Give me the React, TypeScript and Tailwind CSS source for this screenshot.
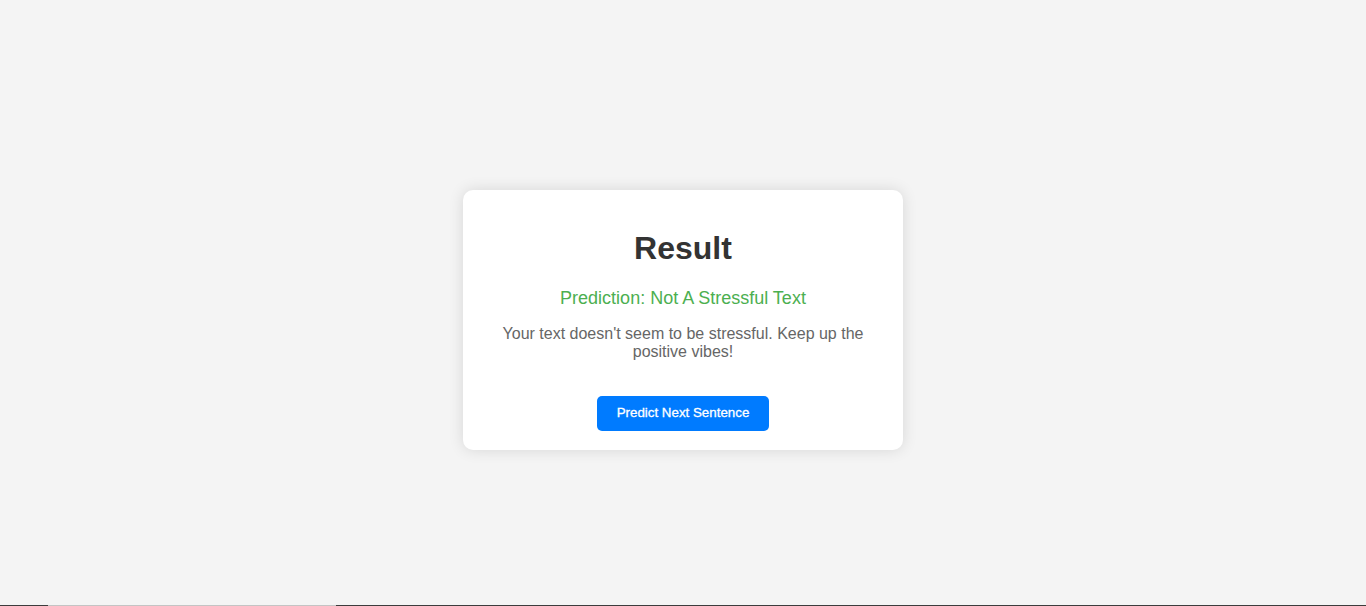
export default function App() {
  return (
    <div className="flex h-[606px] flex-col bg-[#f4f4f4] font-['Liberation_Sans',Arial,sans-serif]">
      <main className="flex flex-1 justify-center pt-[190px]">
        <div className="flex h-fit w-[440px] flex-col items-center rounded-[10px] bg-white px-5 pb-[19px] pt-5 text-center shadow-[0_0_15px_rgba(0,0,0,0.12)]">
          <h1 className="mt-5 text-[32px] font-bold leading-[37px] text-[#333]">
            Result
          </h1>
          <p className="mt-[21px] text-[18px] leading-[21px] text-[#4caf50]">
            Prediction: Not A Stressful Text
          </p>
          <p className="mt-4 w-[400px] text-[16px] leading-[18.4px] text-[#666]">
            Your text doesn't seem to be stressful. Keep up the positive vibes!
          </p>
          <button
            type="button"
            className="mt-[33.7px] h-[35px] rounded-[5px] bg-[#007bff] px-5 text-[13.333px] font-normal text-white [-webkit-text-stroke:0.3px_white]"
          >
            Predict Next Sentence
          </button>
        </div>
      </main>
      <div className="flex h-px">
        <div className="w-12 bg-[#3c3c3c]" />
        <div className="w-[288px] bg-[#c4c4c4]" />
        <div className="flex-1 bg-[#3c3c3c]" />
      </div>
    </div>
  );
}
